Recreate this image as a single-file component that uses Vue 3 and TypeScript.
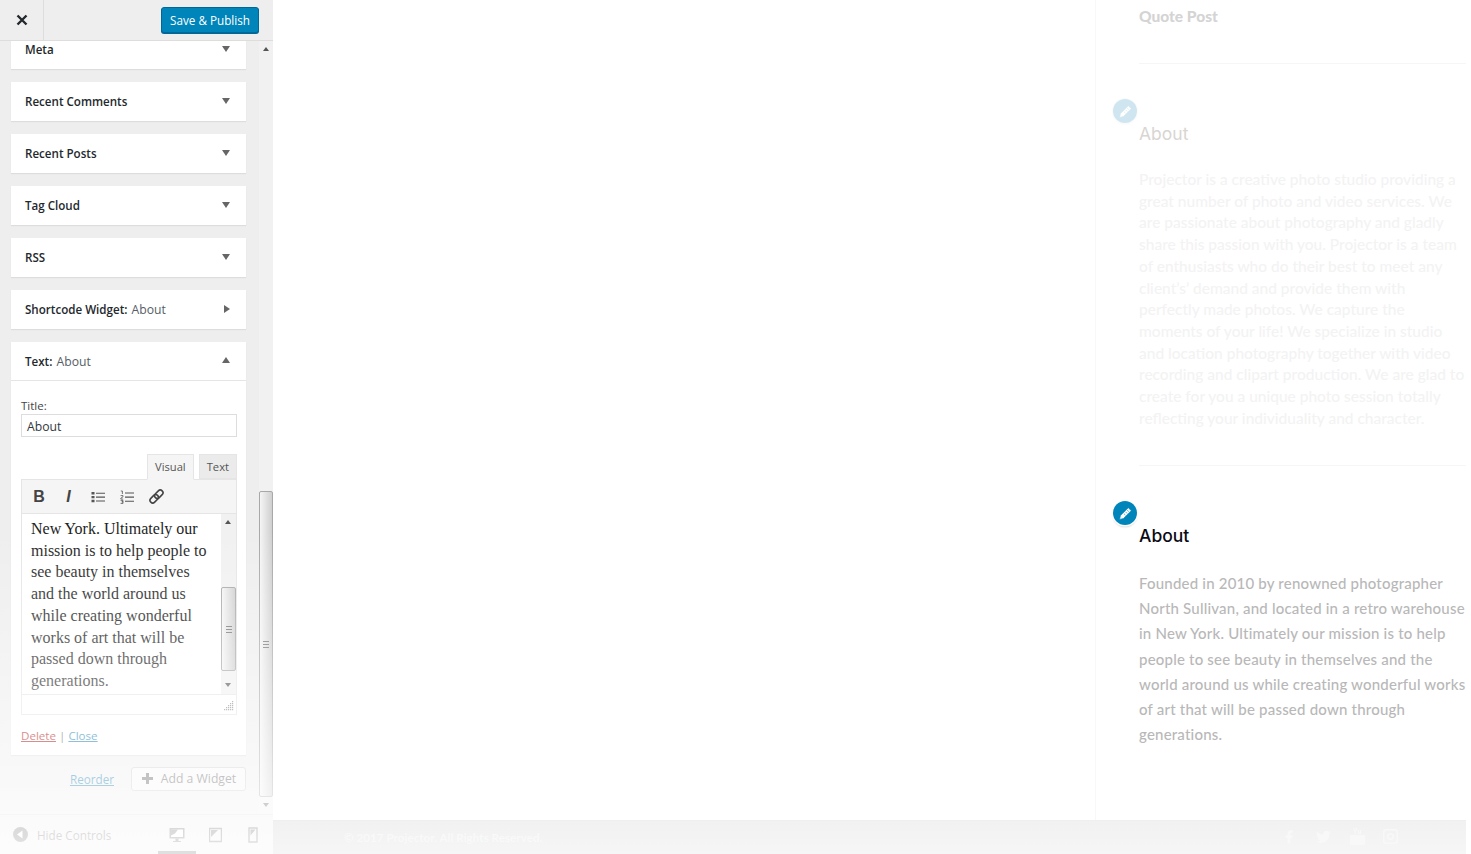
<script setup lang="ts">
const collapsed = [
  { name: 'Meta' },
  { name: 'Recent Comments' },
  { name: 'Recent Posts' },
  { name: 'Tag Cloud' },
  { name: 'RSS' },
  { name: 'Shortcode Widget', sub: 'About', side: true },
]

const editorLines = [
  'New York. Ultimately our',
  'mission is to help people to',
  'see beauty in themselves',
  'and the world around us',
  'while creating wonderful',
  'works of art that will be',
  'passed down through',
  'generations.',
]

const projector = [
  'Projector is a creative photo studio providing a',
  'great number of photo and video services. We',
  'are passionate about photography and gladly',
  'share this passion with you. Projector is a team',
  'of enthusiasts who do their best to meet any',
  'client’s’ demand and provide them with',
  'perfectly made photos. We capture the',
  'moments of your life! We specialize in studio',
  'and location photography together with video',
  'recording and clipart production. We are glad to',
  'create for you a unique photo session totally',
  'reflecting your individuality and character.',
]

const founded = [
  'Founded in 2010 by renowned photographer',
  'North Sullivan, and located in a retro warehouse',
  'in New York. Ultimately our mission is to help',
  'people to see beauty in themselves and the',
  'world around us while creating wonderful works',
  'of art that will be passed down through',
  'generations.',
]
</script>

<template>
  <div class="page">
    <aside class="sidebar">
      <header class="top">
        <div class="close">
          <svg width="12" height="12" viewBox="0 0 12 12"><path d="M1.5 1.5l9 9M10.5 1.5l-9 9" stroke="#23282d" stroke-width="2.4" /></svg>
        </div>
        <button class="publish">Save &amp; Publish</button>
      </header>

      <div class="middle">
        <div class="list">
          <div v-for="w in collapsed" :key="w.name" class="card head">
            <span><b>{{ w.name }}<template v-if="w.sub">:</template></b><template v-if="w.sub">&nbsp;<i>{{ w.sub }}</i></template></span>
            <span class="arrow" :class="{ right: w.side }"></span>
          </div>

          <div class="card open">
            <div class="head line">
              <span><b>Text:</b>&nbsp;<i>About</i></span>
              <span class="arrow up"></span>
            </div>
            <div class="body">
              <label class="label">Title:</label>
              <div class="input">About</div>
              <div class="tabs">
                <span class="tab on">Visual</span>
                <span class="tab">Text</span>
              </div>
              <div class="editor">
                <div class="tools">
                  <span class="cell t-b">B</span>
                  <span class="cell t-i">I</span>
                  <span class="cell">
                    <svg width="14" height="14" viewBox="0 0 14 14">
                      <path d="M0.5 2h3v2.400h-3zM0.5 5.900h3v2.400h-3zM0.5 9.800h3v2.400h-3z" fill="#555" />
                      <path d="M5 3.200h9M5 7.100h9M5 11h9" stroke="#555" stroke-width="1.100" />
                    </svg>
                  </span>
                  <span class="cell">
                    <svg width="14" height="14" viewBox="0 0 14 14">
                      <path d="M0.800 1h1.600v3M0.600 5.600h2.400v1.200l-2.200 1.400v.9h2.400M0.600 10.400h2.400v1.400h-1.200h1.200v1.600h-2.400" fill="none" stroke="#555" stroke-width=".8" />
                      <path d="M5 3h9M5 7.100h9M5 11.200h9" stroke="#555" stroke-width="1.100" />
                    </svg>
                  </span>
                  <span class="cell">
                    <svg width="17" height="17" viewBox="0 0 17 17">
                      <g transform="rotate(-45 8.500 8.500)" fill="none" stroke="#444" stroke-width="1.600">
                        <rect x="0.500" y="5.800" width="9.500" height="5.400" rx="2.700" />
                        <rect x="7" y="5.800" width="9.500" height="5.400" rx="2.700" />
                      </g>
                    </svg>
                  </span>
                </div>
                <div class="pane">
                  <div class="copy">
                    <div v-for="l in editorLines" :key="l">{{ l }}</div>
                  </div>
                  <div class="bar small">
                    <span class="tri up"></span>
                    <div class="track">
                      <div class="thumb"><span class="grip"></span></div>
                    </div>
                    <span class="tri down"></span>
                  </div>
                </div>
                <div class="status">
                  <svg width="10" height="10" viewBox="0 0 10 10" fill="#888">
                    <path d="M8 0h1.200v1.200H8zM6 2h1.200v1.200H6zM8 2h1.200v1.200H8zM4 4h1.200v1.200H4zM6 4h1.200v1.200H6zM8 4h1.200v1.200H8zM2 6h1.200v1.200H2zM4 6h1.200v1.200H4zM6 6h1.200v1.200H6zM8 6h1.200v1.200H8zM0 8h1.200v1.200H0zM2 8h1.200v1.200H2zM4 8h1.200v1.200H4zM6 8h1.200v1.200H6zM8 8h1.200v1.200H8z" />
                  </svg>
                </div>
              </div>
              <div class="links">
                <a class="del">Delete</a><span class="sep">|</span><a class="cls">Close</a>
              </div>
            </div>
          </div>

          <div class="actions">
            <a class="cls">Reorder</a>
            <button class="add">
              <svg width="13" height="13" viewBox="0 0 13 13"><path d="M6.500 1v11M1 6.500h11" stroke="#555" stroke-width="3" /></svg>
              Add a Widget
            </button>
          </div>
        </div>

        <div class="bar big">
          <span class="tri up"></span>
          <div class="track">
            <div class="thumb"><span class="grip"></span></div>
          </div>
          <span class="tri down"></span>
        </div>
      </div>

      <footer class="controls">
        <div class="hide">
          <svg width="15" height="15" viewBox="0 0 15 15">
            <circle cx="7.500" cy="7.500" r="7.500" fill="#555" />
            <path d="M9.500 3.500v8L4 7.500z" fill="#fff" />
          </svg>
          <span>Hide Controls</span>
        </div>
        <div class="devices">
          <div class="device on">
            <svg width="16" height="16" viewBox="0 0 16 16">
              <path d="M0.500 1h15v10.500h-15z" fill="#555" />
              <path d="M2 2.500h12v7.500H2z" fill="#fff" />
              <path d="M2 2.500h7l-3 4-4 2z" fill="#555" />
              <path d="M6.500 11.500h3V14h2.500v1H4v-1h2.500z" fill="#555" />
            </svg>
          </div>
          <div class="device">
            <svg width="13" height="16" viewBox="0 0 13 16">
              <path d="M.5 1.500h12v13H.5z" fill="none" stroke="#555" stroke-width="1.400" />
              <path d="M2 3h7l-7 7z" fill="#555" />
            </svg>
          </div>
          <div class="device">
            <svg width="10" height="16" viewBox="0 0 10 16">
              <path d="M1 1h8v14H1z" fill="none" stroke="#555" stroke-width="1.400" />
              <path d="M2.500 2.500h5l-5 6z" fill="#555" />
            </svg>
          </div>
        </div>
      </footer>
      <div class="fade"></div>
    </aside>

    <main class="preview">
      <div class="content">
        <div class="blank"></div>
        <div class="column">
          <section class="widget first">
            <h4 class="quote">Quote Post</h4>
          </section>
          <section class="widget ghost">
            <span class="pencil">
              <svg width="15" height="15" viewBox="0 0 14 14"><path d="M9.600 1.600l2.800 2.800-7.300 7.300-3.600.8.800-3.600zM8.600 3.800l1.600 1.600M7 5.400l1.600 1.600M5.400 7l1.600 1.600" fill="#fff" stroke="#cfe6f1" stroke-width=".6" /></svg>
            </span>
            <h3>About</h3>
            <div class="text-a">
              <div v-for="l in projector" :key="l">{{ l }}</div>
            </div>
          </section>
          <section class="widget focus">
            <span class="pencil">
              <svg width="15" height="15" viewBox="0 0 14 14"><path d="M9.600 1.600l2.800 2.800-7.300 7.300-3.600.8.800-3.600zM8.600 3.800l1.600 1.600M7 5.400l1.600 1.600M5.400 7l1.600 1.600" fill="#fff" stroke="#0085ba" stroke-width=".6" /></svg>
            </span>
            <h3>About</h3>
            <div class="text-b">
              <div v-for="l in founded" :key="l">{{ l }}</div>
            </div>
          </section>
        </div>
      </div>
      <footer class="site-foot">
        <span class="copyright">© 2017 Projector. All Rights Reserved.</span>
        <div class="social">
          <svg width="16" height="16" viewBox="0 0 24 24"><path d="M14 13.500h2.500l1-4H14v-2c0-1.030 0-2 2-2h1.500V2.140c-.326-.043-1.557-.14-2.857-.14C11.928 2 10 3.657 10 6.700v2.800H7v4h3V22h4v-8.500z" /></svg>
          <svg width="17" height="17" viewBox="0 0 24 24"><path d="M22.460 6c-.77.35-1.600.58-2.460.69.88-.53 1.560-1.370 1.880-2.380-.83.5-1.750.85-2.720 1.050C18.370 4.500 17.260 4 16 4c-2.350 0-4.270 1.920-4.270 4.290 0 .34.04.67.11.98C8.280 9.090 5.110 7.380 3 4.790c-.37.63-.58 1.370-.58 2.150 0 1.490.75 2.810 1.910 3.560-.71 0-1.370-.2-1.950-.5v.03c0 2.080 1.480 3.820 3.440 4.210a4.220 4.220 0 0 1-1.930.07 4.280 4.280 0 0 0 4 2.980 8.521 8.521 0 0 1-5.330 1.840c-.34 0-.68-.02-1.020-.06C3.440 20.290 5.700 21 8.120 21 16 21 20.330 14.460 20.330 8.790c0-.19 0-.37-.01-.56.84-.6 1.560-1.360 2.140-2.230z" /></svg>
          <svg width="15" height="17" viewBox="0 0 15 17"><path d="M3 0h1.200l1 2.500L6.200 0h1.200L5.800 3.800V6H4.700V3.800zM8 1.800h1v3h1v-3h1V6H8zM1 7h13a1 1 0 0 1 1 1v7.500a1.500 1.500 0 0 1-1.500 1.500h-12A1.500 1.500 0 0 1 0 15.500V8a1 1 0 0 1 1-1z" /></svg>
          <svg width="15" height="15" viewBox="0 0 15 15"><path fill-rule="evenodd" d="M3 0h9a3 3 0 0 1 3 3v9a3 3 0 0 1-3 3H3a3 3 0 0 1-3-3V3a3 3 0 0 1 3-3zm.5 1.500a2 2 0 0 0-2 2v8a2 2 0 0 0 2 2h8a2 2 0 0 0 2-2v-8a2 2 0 0 0-2-2zm4 2.500a3.500 3.500 0 1 1 0 7 3.500 3.500 0 0 1 0-7zm0 1.500a2 2 0 1 0 0 4 2 2 0 0 0 0-4z" /></svg>
        </div>
      </footer>
    </main>
  </div>
</template>

<style scoped>
.page {
  display: flex;
  width: 1471px;
  height: 854px;
  overflow: hidden;
  background: #fff;
  font-family: "Open Sans", "Noto Sans", sans-serif;
  font-size: 12.2px;
  color: #23282d;
}

.sidebar {
  position: relative;
  flex: 0 0 273px;
  display: flex;
  flex-direction: column;
  background: #eee;
  overflow: hidden;
}

.top {
  flex: 0 0 41px;
  box-sizing: border-box;
  display: flex;
  align-items: center;
  justify-content: space-between;
  padding: 0 14px 0 0;
  background: #eee;
  border-bottom: 1px solid #ddd;
  z-index: 1;
}

.close {
  width: 44px;
  height: 40px;
  box-sizing: border-box;
  display: flex;
  align-items: center;
  justify-content: center;
  border-right: 1px solid #ddd;
}

.publish {
  width: 98px;
  height: 26px;
  padding: 0;
  border: 1px solid #006799;
  border-radius: 3px;
  background: #0085ba;
  color: #fff;
  font: 11.7px "Open Sans", sans-serif;
  box-shadow: 0 1px 0 #006799;
}

.middle {
  flex: 1;
  min-height: 0;
  display: flex;
}

.list {
  flex: 0 0 259px;
  box-sizing: border-box;
  padding: 0 13px 0 11px;
  margin-top: -11px;
}

.card {
  background: #fff;
  box-shadow: 0 1px 1px rgba(0, 0, 0, 0.07);
  margin-bottom: 13px;
  font-size: 12.2px;
}

.head {
  height: 39px;
  box-sizing: border-box;
  display: flex;
  align-items: center;
  justify-content: space-between;
  padding: 0 16px 0 14px;
}

.head b {
  font-size: 11.6px;
  font-weight: 600;
}

.head i {
  font-style: normal;
  color: #555d66;
  margin-left: 1px;
}

.arrow {
  width: 0;
  height: 0;
  margin-top: -2px;
  border-left: 4.5px solid transparent;
  border-right: 4.5px solid transparent;
  border-top: 6px solid #666;
}

.arrow.right {
  border-top: 4.5px solid transparent;
  border-bottom: 4.5px solid transparent;
  border-left: 6px solid #666;
  border-right: 0;
}

.arrow.up {
  border-top: 0;
  border-bottom: 6px solid #666;
}

.line {
  border-bottom: 1px solid #e5e5e5;
}

.open {
  margin-bottom: 12px;
}

.body {
  padding: 17px 9px 10px 10px;
}

.label {
  display: block;
  height: 16px;
  font-size: 11.5px;
  line-height: 16px;
  color: #444;
}

.input {
  height: 23px;
  box-sizing: border-box;
  border: 1.5px solid #ddd;
  padding-left: 5px;
  line-height: 23px;
  font-size: 12.2px;
  color: #32373c;
}

.tabs {
  display: flex;
  justify-content: flex-end;
  gap: 5px;
  margin-top: 17px;
}

.tab {
  height: 25px;
  box-sizing: border-box;
  padding: 0 7px;
  line-height: 23px;
  font-size: 11.2px;
  color: #555;
  background: #ebebeb;
  border: 1px solid #e5e5e5;
}

.tab.on {
  height: 26px;
  margin-bottom: -1px;
  background: #f5f5f5;
  border-bottom-color: #f5f5f5;
  position: relative;
}

.editor {
  border: 1px solid #e5e5e5;
}

.tools {
  height: 33px;
  display: flex;
  align-items: center;
  padding-left: 2.5px;
  background: #f5f5f5;
  border-bottom: 1px solid #e5e5e5;
  color: #444;
}

.cell {
  flex: 0 0 29.3px;
  display: flex;
  justify-content: center;
}

.t-b {
  font: bold 16px "Liberation Sans", sans-serif;
}

.t-i {
  font: italic bold 16px "Liberation Sans", sans-serif;
}

.pane {
  height: 180px;
  display: flex;
  border-bottom: 1px solid #e5e5e5;
}

.copy {
  flex: 1;
  padding: 4px 0 0 9px;
  font: 16px/21.7px "Liberation Serif", serif;
  color: #1e1e1e;
  white-space: nowrap;
  overflow: hidden;
}

.status {
  height: 19px;
  box-sizing: border-box;
  display: flex;
  justify-content: flex-end;
  align-items: flex-end;
  padding: 0 2px 3px 0;
}

.links {
  margin-top: 12px;
  font-size: 11.6px;
  line-height: 18px;
}

.del,
.cls {
  text-decoration: underline;
}

.del {
  color: #a00;
}

.cls {
  color: #0073aa;
}

.sep {
  margin: 0 3px;
  color: #555;
}

.actions {
  display: flex;
  justify-content: flex-end;
  align-items: center;
  gap: 17px;
  font-size: 11.7px;
}

.add {
  width: 115px;
  height: 24px;
  box-sizing: border-box;
  display: flex;
  align-items: center;
  justify-content: center;
  gap: 7px;
  padding: 0 0 2px;
  border: 1px solid #ccc;
  border-radius: 3px;
  background: #f7f7f7;
  color: #555;
  font: 12.2px "Open Sans", sans-serif;
}

.bar {
  display: flex;
  flex-direction: column;
  align-items: center;
  background: #f1f1f1;
}

.bar.big {
  flex: 0 0 14px;
}

.bar.small {
  flex: 0 0 15px;
}

.tri {
  flex: 0 0 17px;
  width: 0;
  height: 0;
  box-sizing: content-box;
  position: relative;
}

.tri::after {
  content: "";
  position: absolute;
  left: -3.5px;
  top: 6px;
  border-left: 3.5px solid transparent;
  border-right: 3.5px solid transparent;
}

.tri.up::after {
  border-bottom: 4px solid #555;
}

.tri.down::after {
  border-top: 4px solid #555;
}

.track {
  flex: 1;
  width: 100%;
  min-height: 0;
  display: flex;
  flex-direction: column;
  justify-content: flex-end;
}

.thumb {
  box-sizing: border-box;
  border: 1px solid #a8a8a8;
  border-radius: 2px;
  background: linear-gradient(90deg, #f5f5f5, #cfcfcf);
  display: flex;
  align-items: center;
  justify-content: center;
}

.big .thumb {
  height: 306px;
}

.small .thumb {
  height: 84px;
  margin-bottom: 6px;
}

.grip {
  width: 6px;
  height: 5px;
  border-top: 1px solid #777;
  border-bottom: 1px solid #777;
  background: linear-gradient(#777, #777) center / 100% 1px no-repeat;
}

.controls {
  flex: 0 0 40px;
  box-sizing: border-box;
  display: flex;
  align-items: center;
  justify-content: space-between;
  padding: 0 1px 0 13px;
  background: #eee;
  border-top: 1px solid #ddd;
}

.hide {
  display: flex;
  align-items: center;
  gap: 9px;
  color: #555;
  font-size: 11.7px;
}

.devices {
  display: flex;
  height: 100%;
}

.device {
  width: 38px;
  padding-top: 3px;
  display: flex;
  align-items: center;
  justify-content: center;
  box-sizing: border-box;
  border-bottom: 3px solid transparent;
}

.device.on {
  border-bottom-color: #333;
}

.fade {
  position: absolute;
  inset: 530px 0 0;
  background: linear-gradient(rgba(255, 255, 255, 0), rgba(255, 255, 255, 0.85));
  pointer-events: none;
}

.preview {
  flex: 0 0 1193px;
  display: flex;
  flex-direction: column;
  overflow: hidden;
}

.content {
  flex: 1;
  min-height: 0;
  display: flex;
  overflow: hidden;
}

.blank {
  flex: 0 0 822px;
  border-right: 1px solid #f8f8f8;
}

.column {
  flex: 1;
  min-width: 0;
  padding-left: 43px;
  white-space: nowrap;
  font-family: Lato, sans-serif;
}

.widget {
  position: relative;
}

.first {
  height: 64px;
  box-sizing: border-box;
  border-bottom: 1px solid #f6f6f6;
}

.quote {
  margin: 0;
  padding-top: 6px;
  font-size: 15.5px;
  line-height: 20px;
  font-weight: 900;
  color: #d4d4d4;
}

h3 {
  margin: 0;
  font: 500 17.5px/24px Inter, sans-serif;
}

.ghost {
  height: 402px;
  box-sizing: border-box;
  padding-top: 58px;
  border-bottom: 1px solid #f6f6f6;
}

.ghost h3 {
  font-weight: 400;
  color: #d9d5d2;
}

.text-a {
  margin-top: 23px;
  font-size: 15.5px;
  line-height: 21.7px;
  font-weight: 500;
  color: #f3f3f3;
}

.focus {
  padding-top: 58px;
}

.focus h3 {
  color: #0a0a14;
}

.text-b {
  margin-top: 23px;
  font-size: 15px;
  line-height: 25.2px;
  letter-spacing: 0.2px;
  font-weight: 500;
  color: #b8b8b8;
}

.pencil {
  position: absolute;
  left: -26px;
  top: 35px;
  width: 24px;
  height: 24px;
  border-radius: 50%;
  display: flex;
  align-items: center;
  justify-content: center;
  background: #cfe6f1;
  box-shadow: 0 0 0 1px #fbfbfb, 0 1px 2px rgba(0, 0, 0, 0.05);
}

.focus .pencil {
  background: #0085ba;
  box-shadow: 0 0 0 1.5px #fff, 0 2px 2px rgba(0, 0, 0, 0.2);
}

.site-foot {
  flex: 0 0 34px;
  display: flex;
  align-items: center;
  justify-content: space-between;
  padding: 0 68px 2px 71px;
  background: linear-gradient(#f1f1f1, #f6f6f6);
  border-top: 1px solid #efefef;
  box-sizing: border-box;
  font-family: Lato, sans-serif;
}

.copyright {
  font-size: 11.7px;
  font-weight: 700;
  color: #f9f9f9;
}

.social {
  display: flex;
  align-items: center;
  gap: 18px;
}

.social svg {
  fill: #f8f8f8;
}
</style>
